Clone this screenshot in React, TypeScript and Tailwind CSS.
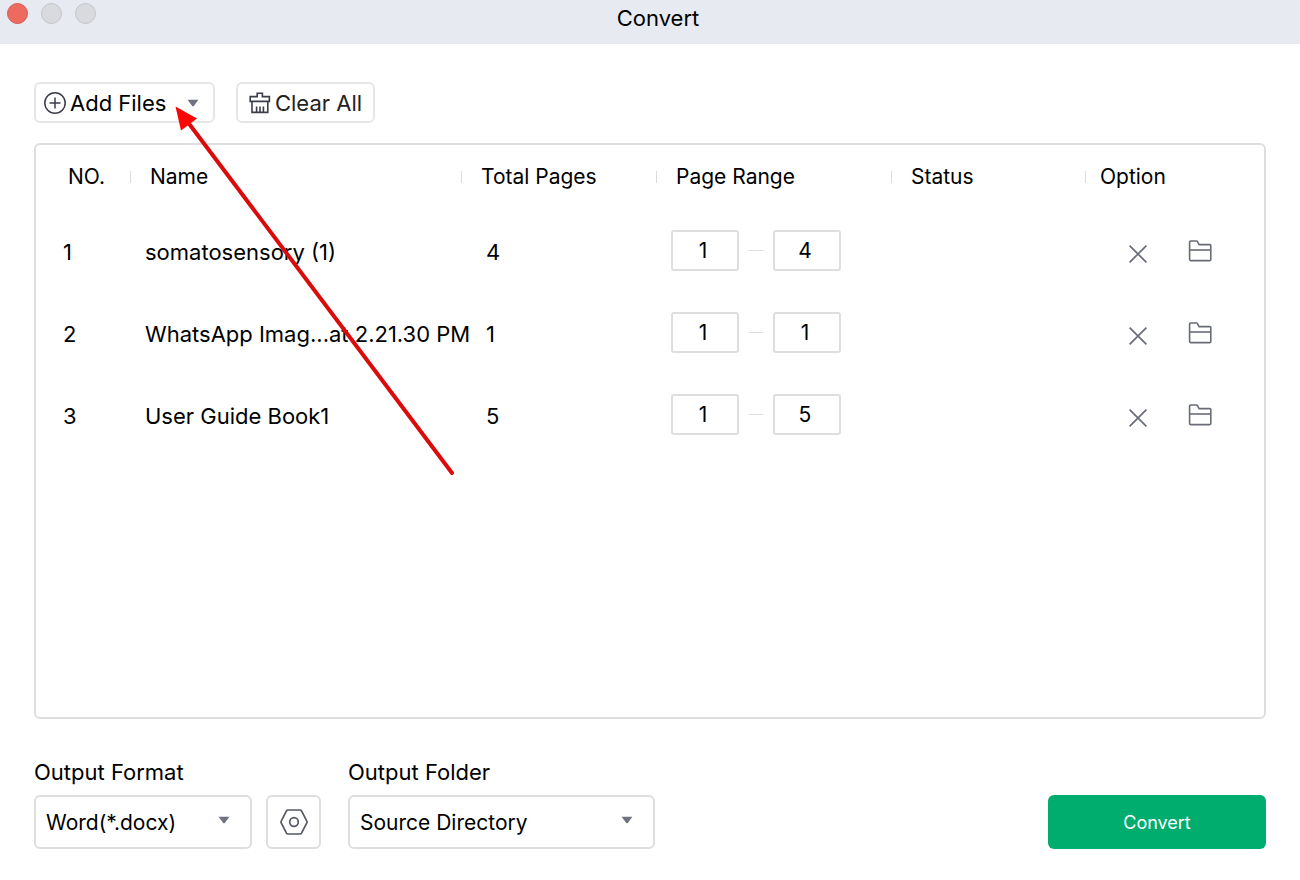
import { useState } from 'react';

type FileRow = {
  id: number;
  name: string;
  pages: number;
  from: string;
  to: string;
};

const initialFiles: FileRow[] = [
  { id: 1, name: 'somatosensory (1)', pages: 4, from: '1', to: '4' },
  { id: 2, name: 'WhatsApp Imag...at 2.21.30 PM', pages: 1, from: '1', to: '1' },
  { id: 3, name: 'User Guide Book1', pages: 5, from: '1', to: '5' },
];

function Caret({ className = '' }: { className?: string }) {
  return (
    <svg width="12" height="8" viewBox="0 0 12 8" className={className} aria-hidden="true">
      <path d="M.6.8h10.8L7 6.8q-1 1-2 0z" fill="#6f737f" />
    </svg>
  );
}

function PlusCircleIcon() {
  return (
    <svg width="22" height="22" viewBox="0 0 22 22" fill="none" stroke="#3b3e4a" strokeWidth="1.5" aria-hidden="true">
      <circle cx="11" cy="11" r="10.2" />
      <path d="M11 5.5v11M5.5 11h11" />
    </svg>
  );
}

function BroomIcon() {
  return (
    <svg width="22" height="22" viewBox="0 0 22 22" fill="none" stroke="#3b3e4a" strokeWidth="1.6" aria-hidden="true">
      <path d="M1.2 9.4V4.6h7V1.2h5.2v3.4h7v4.8z" />
      <path d="M3 9.4v11h15.8v-11M7.6 20v-5.6M11 20v-5.6M14.4 20v-5.6" />
    </svg>
  );
}

function CloseIcon() {
  return (
    <svg width="18" height="18" viewBox="0 0 18 18" fill="none" stroke="#686c76" strokeWidth="1.7" aria-hidden="true">
      <path d="M.6.6l16.8 16.8M17.4.6L.6 17.4" />
    </svg>
  );
}

function FolderIcon() {
  return (
    <svg width="24" height="22" viewBox="0 0 24 22" fill="none" stroke="#686c76" strokeWidth="1.6" strokeLinejoin="round" aria-hidden="true">
      <path d="M2.6 1h5.8q.8 0 1.2.8L11 4.6h10.8q1 0 1 1v14q0 1-1 1H2.6q-1 0-1-1V2q0-1 1-1z" />
      <path d="M1.6 10h21.2" />
    </svg>
  );
}

function NutIcon() {
  return (
    <svg width="28" height="26" viewBox="0 0 28 26" fill="none" stroke="#555862" strokeWidth="1.7" strokeLinejoin="round" aria-hidden="true">
      <path d="M8 1h12q1 0 1.5.9l5.3 10.2q.5.9 0 1.8l-5.3 10.2q-.5.9-1.5.9H8q-1 0-1.5-.9L1.2 13.9q-.5-.9 0-1.8L6.5 1.9Q7 1 8 1z" />
      <circle cx="14" cy="13" r="4.3" />
    </svg>
  );
}

function HeaderCell({ label, className, last = false }: { label: string; className: string; last?: boolean }) {
  return (
    <th scope="col" className="h-16 p-0 text-left text-[21px] font-normal">
      <div className={`flex items-center justify-between ${className}`}>
        {label}
        {!last && <span className="h-3 w-px bg-[#dcdcdc]" />}
      </div>
    </th>
  );
}

// Red pointer drawn across the table towards the Add Files menu
function PointerArrow() {
  return (
    <svg width="282" height="372" viewBox="0 0 282 372" className="pointer-events-none absolute top-[105px] left-[174px] z-10" aria-hidden="true">
      <path d="M16 20L278 368" stroke="#dc0b0b" strokeWidth="4" strokeLinecap="round" />
      <path d="M1.5 1.5L23 13.5L7 25.5z" fill="#fb0505" />
    </svg>
  );
}

export default function App() {
  const [files, setFiles] = useState(initialFiles);

  const updateRange = (id: number, key: 'from' | 'to', value: string) => {
    setFiles(files.map((file) => (file.id === id ? { ...file, [key]: value } : file)));
  };

  const pageInput = 'h-[41px] w-[68px] rounded-[3px] border-2 border-[#dedede] bg-white pr-1 text-center text-[21px] outline-none';
  const selectBox = 'h-[54px] w-full appearance-none rounded-md border-2 border-[#dedede] bg-white pt-0.5 pl-[10px] text-[21px] outline-none';

  return (
    <div className="relative flex min-h-screen flex-col bg-white font-['Inter',sans-serif] text-[22px] leading-7 text-black">
      <header className="grid h-11 grid-cols-[1fr_auto_1fr] bg-[#e8eaf2]">
        <div className="flex gap-[13px] pt-[3px] pl-[7px]">
          <button aria-label="Close" className="size-[21px] rounded-full border border-[#d25c53] bg-[#ed6a5e]" />
          <button aria-label="Minimize" className="size-[21px] rounded-full border border-[#c4c4c8] bg-[#d9dadd]" />
          <button aria-label="Zoom" className="size-[21px] rounded-full border border-[#c4c4c8] bg-[#d9dadd]" />
        </div>
        <h1 className="pt-1 pl-4">Convert</h1>
      </header>

      <main className="flex flex-1 flex-col px-[34px] pt-[38px] pb-[31px]">
        <div className="flex gap-[21px]">
          <button className="flex h-[41px] w-[181px] items-center rounded-md border-2 border-[#e6e6e8] pl-2">
            <PlusCircleIcon />
            <span className="ml-1">Add Files</span>
            <Caret className="mr-[14px] ml-auto" />
          </button>
          <button
            onClick={() => setFiles([])}
            className="flex h-[41px] w-[139px] items-center justify-center gap-1 rounded-md border-2 border-[#e6e6e8] text-[#222]"
          >
            <BroomIcon />
            Clear All
          </button>
        </div>

        <section className="mt-5 flex-1 rounded-md border-2 border-[#dedede]">
          <table className="w-full table-fixed border-collapse">
            <colgroup>
              <col className="w-[95px]" />
              <col />
              <col className="w-[195px]" />
              <col className="w-[235px]" />
              <col className="w-[194px]" />
              <col className="w-[178px]" />
            </colgroup>
            <thead>
              <tr>
                <HeaderCell label="NO." className="pl-8" />
                <HeaderCell label="Name" className="pl-[19px]" />
                <HeaderCell label="Total Pages" className="pl-[19px]" />
                <HeaderCell label="Page Range" className="pl-[19px]" />
                <HeaderCell label="Status" className="pl-[19px]" />
                <HeaderCell label="Option" className="pl-[14px]" last />
              </tr>
            </thead>
            <tbody>
              {files.map((file) => (
                <tr key={file.id} className="h-[82px]">
                  <td className="pt-1 pl-[27px]">{file.id}</td>
                  <td className="pt-1 pl-[14px] whitespace-nowrap">{file.name}</td>
                  <td className="pt-1 pl-6">{file.pages}</td>
                  <td className="pl-[14px]">
                    <div className="flex items-center gap-[10px]">
                      <input
                        aria-label={`First page of ${file.name}`}
                        value={file.from}
                        onChange={(e) => updateRange(file.id, 'from', e.target.value)}
                        className={pageInput}
                      />
                      <span className="h-px w-[14px] bg-[#dedede]" />
                      <input
                        aria-label={`Last page of ${file.name}`}
                        value={file.to}
                        onChange={(e) => updateRange(file.id, 'to', e.target.value)}
                        className={pageInput}
                      />
                    </div>
                  </td>
                  <td />
                  <td className="pt-0.5">
                    <div className="flex items-center gap-[41px] pl-[43px]">
                      <button
                        aria-label={`Remove ${file.name}`}
                        onClick={() => setFiles(files.filter((f) => f.id !== file.id))}
                        className="pt-1.5"
                      >
                        <CloseIcon />
                      </button>
                      <button aria-label={`Open folder of ${file.name}`}>
                        <FolderIcon />
                      </button>
                    </div>
                  </td>
                </tr>
              ))}
            </tbody>
          </table>
        </section>

        <footer className="mt-[39px] flex items-end">
          <div className="w-[218px]">
            <label htmlFor="format" className="block">Output Format</label>
            <div className="relative mt-[9px]">
              <select id="format" className={selectBox}>
                <option>Word(*.docx)</option>
              </select>
              <Caret className="pointer-events-none absolute top-[21px] right-[22px]" />
            </div>
          </div>
          <button
            aria-label="Format settings"
            className="ml-[14px] flex h-[54px] w-[55px] items-center justify-center rounded-md border-2 border-[#dedede]"
          >
            <NutIcon />
          </button>
          <div className="ml-[27px] w-[307px]">
            <label htmlFor="folder" className="block">Output Folder</label>
            <div className="relative mt-[9px]">
              <select id="folder" className={selectBox}>
                <option>Source Directory</option>
              </select>
              <Caret className="pointer-events-none absolute top-[21px] right-[22px]" />
            </div>
          </div>
          <button className="ml-auto h-[54px] w-[218px] rounded-md bg-[#00ad6e] pt-0.5 text-[18px] text-white">Convert</button>
        </footer>
      </main>

      <PointerArrow />
    </div>
  );
}
